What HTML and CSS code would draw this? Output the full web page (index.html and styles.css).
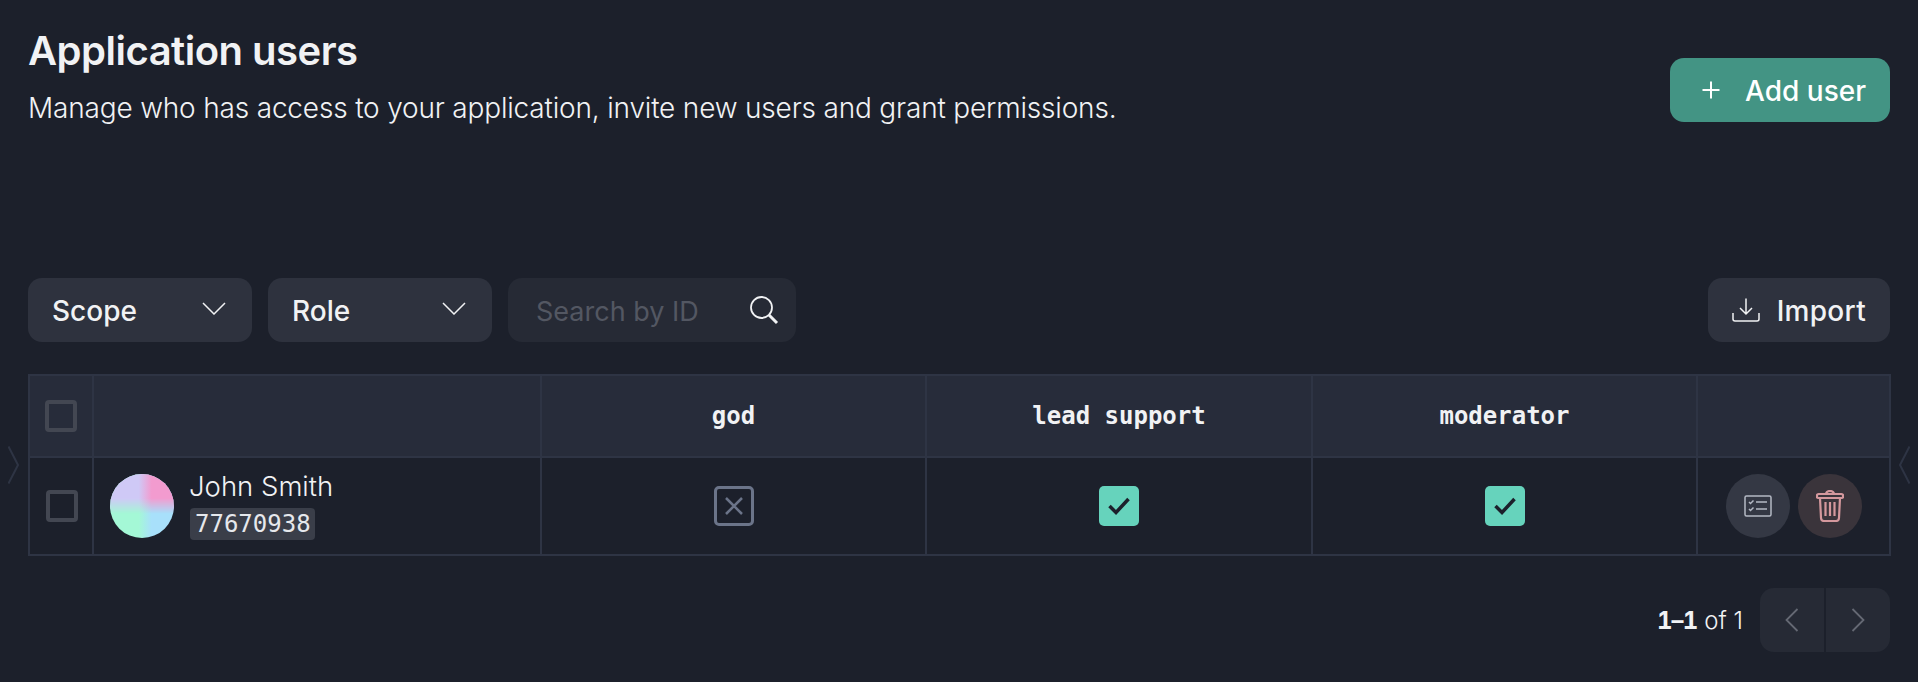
FILE: index.html
```html
<!DOCTYPE html>
<html lang="en">
<head>
<meta charset="UTF-8">
<meta name="viewport" content="width=device-width, initial-scale=1.0">
<title>Application users</title>
<link rel="stylesheet" href="styles.css">
</head>
<body>

<svg class="side-arrow side-arrow-left" viewBox="0 0 11 38"><path d="M0.5 0.5 L10 19 L0.5 37.500"/></svg>
<svg class="side-arrow side-arrow-right" viewBox="0 0 11 38"><path d="M10.500 0.5 L1 19 L10.500 37.500"/></svg>

<div class="page">
  <div class="top">
    <div>
      <h1 class="title">Application users</h1>
      <p class="subtitle">Manage who has access to your application, invite new users and grant permissions.</p>
    </div>
    <button class="btn btn-add">
      <svg class="icon-plus" viewBox="0 0 18 18"><path d="M9 0.500 V17.500 M0.500 9 H17.500"/></svg>
      <span class="btn-label">Add user</span>
    </button>
  </div>

  <div class="filters">
    <button class="select">
      <span class="btn-label">Scope</span>
      <svg class="icon-chevron" viewBox="0 0 24 13"><path d="M1 1 L12 12 L23 1"/></svg>
    </button>
    <button class="select">
      <span class="btn-label">Role</span>
      <svg class="icon-chevron" viewBox="0 0 24 13"><path d="M1 1 L12 12 L23 1"/></svg>
    </button>
    <div class="search">
      <span class="search-text">Search by ID</span>
      <svg class="icon-search" viewBox="0 0 30 30"><circle cx="12.500" cy="12.500" r="10.500"/><path class="thick" d="M20 20 L28 28"/></svg>
    </div>
    <button class="btn btn-import">
      <svg class="icon-import" viewBox="0 0 28 24"><path d="M14 0.500 V15.500 M8 10 L14 16 L20 10 M1 15 V21 Q1 23 3 23 H25 Q27 23 27 21 V15"/></svg>
      <span class="btn-label">Import</span>
    </button>
  </div>

  <table class="users">
    <colgroup>
      <col class="col-check"><col class="col-user"><col class="col-role"><col class="col-role-wide"><col class="col-role"><col class="col-actions">
    </colgroup>
    <thead>
      <tr>
        <th><span class="checkbox"></span></th>
        <th></th>
        <th>god</th>
        <th>lead support</th>
        <th>moderator</th>
        <th></th>
      </tr>
    </thead>
    <tbody>
      <tr>
        <td><span class="checkbox checkbox-row"></span></td>
        <td>
          <div class="user">
            <div class="avatar"></div>
            <div>
              <div class="user-name">John Smith</div>
              <code class="user-id">77670938</code>
            </div>
          </div>
        </td>
        <td>
          <span class="perm perm-off">
            <svg viewBox="0 0 18 18"><path d="M1 1 L17 17 M17 1 L1 17"/></svg>
          </span>
        </td>
        <td>
          <span class="perm perm-on">
            <svg viewBox="0 0 22 18"><path d="M1.500 9 L8 15.500 L20.500 2"/></svg>
          </span>
        </td>
        <td>
          <span class="perm perm-on">
            <svg viewBox="0 0 22 18"><path d="M1.500 9 L8 15.500 L20.500 2"/></svg>
          </span>
        </td>
        <td>
          <div class="actions">
            <button class="round round-details">
              <svg viewBox="0 0 28 22"><rect x="1" y="1" width="26" height="20" rx="1.500"/><path d="M5 7 L6.500 8.500 L9.500 5.500 M5 14 L6.500 15.500 L9.500 12.500 M12 7 H23 M12 14 H23"/></svg>
            </button>
            <button class="round round-delete">
              <svg viewBox="0 0 28 32"><path d="M1 7 V5.500 Q1 4 2.500 4 H25.500 Q27 4 27 5.500 V7 Q27 8 25.500 8 H2.500 Q1 8 1 7 Z M10 4 Q10.500 1 14 1 Q17.500 1 18 4 M4 8 L5 28 Q5.200 31 8 31 H20 Q22.800 31 23 28 L24 8 M9.500 12 V26 M14 12 V26 M18.500 12 V26"/></svg>
            </button>
          </div>
        </td>
      </tr>
    </tbody>
  </table>

  <div class="pagination">
    <span class="page-count"><b>1–1</b> of 1</span>
    <div class="pager">
      <button class="pager-btn"><svg viewBox="0 0 14 24"><path d="M12.500 1 L1.500 12 L12.500 23"/></svg></button>
      <button class="pager-btn"><svg viewBox="0 0 14 24"><path d="M1.500 1 L12.500 12 L1.500 23"/></svg></button>
    </div>
  </div>
</div>

</body>
</html>
```

FILE: styles.css
```css
* {
  box-sizing: border-box;
}
body {
  font-family: 'Inter', 'Liberation Sans', sans-serif;
  background-color: #1c202b;
  color: #f1f2f4;
  margin: 0;
  overflow: hidden;
}
button {
  font-family: inherit;
  border: none;
  cursor: pointer;
}
svg {
  display: block;
  fill: none;
}
.page {
  height: 682px;
  padding: 30px 28px;
}

/* Heading */
.top {
  display: flex;
  justify-content: space-between;
  align-items: flex-start;
  height: 248px;
}
.title {
  margin: 0;
  font-size: 40px;
  line-height: 42px;
  font-weight: 600;
  letter-spacing: -0.5px;
}
.subtitle {
  margin: 18px 0 0;
  font-size: 28px;
  line-height: 36px;
  font-weight: 300;
  letter-spacing: -0.18px;
}

/* Buttons */
.btn {
  display: flex;
  align-items: center;
  height: 64px;
  border-radius: 14px;
  font-size: 28px;
  font-weight: 500;
}
.btn-label {
  padding-top: 2px;
}
.btn-add {
  width: 220px;
  margin-top: 28px;
  padding: 0 24px 0 32px;
  justify-content: space-between;
  background-color: #439484;
  color: #fff;
}
.icon-plus {
  width: 18px;
  height: 18px;
  stroke: #fff;
  stroke-width: 2;
}
.btn-import {
  width: 182px;
  margin-left: auto;
  padding: 0 24px;
  justify-content: space-between;
  background-color: #2e323e;
  color: #f1f2f4;
  letter-spacing: 0.3px;
}
.icon-import {
  width: 28px;
  height: 24px;
  stroke: #f1f2f4;
  stroke-width: 1.500;
}

/* Filters */
.filters {
  display: flex;
  gap: 16px;
}
.select {
  display: flex;
  justify-content: space-between;
  align-items: center;
  width: 224px;
  height: 64px;
  padding: 0 26px 0 24px;
  border-radius: 14px;
  background-color: #2e323e;
  color: #f1f2f4;
  font-size: 28px;
  font-weight: 500;
}
.icon-chevron {
  width: 24px;
  height: 13px;
  stroke: #f1f2f4;
  stroke-width: 1.500;
  margin-top: -4px;
}
.search {
  display: flex;
  justify-content: space-between;
  align-items: center;
  width: 288px;
  height: 64px;
  padding: 0 17px 0 28px;
  border-radius: 14px;
  background-color: #262a35;
}
.search-text {
  padding-top: 2px;
  color: #535762;
  font-size: 27px;
}
.icon-search {
  width: 30px;
  height: 30px;
  stroke: #f1f2f4;
  stroke-width: 1.800;
}
.icon-search .thick {
  stroke-width: 3;
}

/* Table */
.users {
  width: 1861px;
  margin-top: 32px;
  border-collapse: collapse;
  table-layout: fixed;
}
.col-check {
  width: 64px;
}
.col-user {
  width: 448px;
}
.col-role {
  width: 385px;
}
.col-role-wide {
  width: 386px;
}
.col-actions {
  width: 193px;
}
.users th,
.users td {
  border: 2px solid #2e3444;
  padding: 0;
  text-align: center;
}
.users th {
  height: 82px;
  background-color: #272c3a;
  font-family: 'DejaVu Sans Mono', monospace;
  font-size: 24px;
  font-weight: 700;
}
.users td {
  height: 98px;
}
.checkbox {
  display: inline-block;
  width: 32px;
  height: 32px;
  vertical-align: middle;
  border: 4px solid #434752;
  border-radius: 4px;
}
.checkbox-row {
  margin-left: 2px;
}
.user {
  display: flex;
  align-items: center;
  gap: 16px;
  padding-left: 16px;
  text-align: left;
}
.avatar {
  position: relative;
  width: 64px;
  height: 64px;
  border-radius: 50%;
  overflow: hidden;
  background: linear-gradient(to right, #a4f8d6 45%, #a8e0fb 65%);
}
.avatar::after {
  content: "";
  position: absolute;
  inset: 0;
  background: linear-gradient(to right, #cfc9f6 45%, #f29bcf 65%);
  -webkit-mask-image: linear-gradient(to bottom, #000 38%, transparent 62%);
  mask-image: linear-gradient(to bottom, #000 38%, transparent 62%);
}
.user-name {
  margin-top: -4px;
  margin-left: -1px;
  font-size: 27.500px;
  line-height: 34px;
  font-weight: 300;
}
.user-id {
  display: inline-block;
  margin-top: 5px;
  padding: 0 4px 0 5px;
  height: 32px;
  line-height: 32px;
  border-radius: 4px;
  background-color: #3a3e49;
  color: #e6e8ec;
  font-family: 'DejaVu Sans Mono', monospace;
  font-size: 24px;
}
.perm {
  display: inline-flex;
  justify-content: center;
  align-items: center;
  width: 40px;
  height: 40px;
  vertical-align: middle;
  border-radius: 5px;
}
.perm-off {
  border: 3px solid #6b7489;
}
.perm-off svg {
  width: 18px;
  height: 18px;
  stroke: #6b7489;
  stroke-width: 2.500;
}
.perm-on {
  background-color: #66d3bc;
}
.perm-on svg {
  width: 22px;
  height: 18px;
  stroke: #1c202b;
  stroke-width: 3.500;
}
.actions {
  display: flex;
  justify-content: center;
  gap: 8px;
}
.round {
  display: flex;
  justify-content: center;
  align-items: center;
  width: 64px;
  height: 64px;
  padding: 0;
  border-radius: 50%;
}
.round-details {
  background-color: #343844;
}
.round-details svg {
  width: 28px;
  height: 22px;
  stroke: #b4b9c4;
  stroke-width: 1.500;
}
.round-delete {
  background-color: #3a343b;
}
.round-delete svg {
  width: 28px;
  height: 32px;
  stroke: #d4989d;
  stroke-width: 2.200;
}

/* Footer */
.pagination {
  display: flex;
  justify-content: flex-end;
  align-items: center;
  gap: 17px;
  margin-top: 32px;
}
.page-count {
  font-size: 24px;
  font-weight: 300;
}
.page-count b {
  font-weight: 700;
  font-variant-numeric: tabular-nums;
  letter-spacing: -0.8px;
}
.pager {
  display: flex;
  gap: 2px;
  width: 130px;
  height: 64px;
  border-radius: 14px;
  overflow: hidden;
}
.pager-btn {
  display: flex;
  justify-content: center;
  align-items: center;
  flex: 1;
  padding: 0;
  background-color: #262a35;
}
.pager-btn svg {
  width: 14px;
  height: 24px;
  stroke: #646873;
  stroke-width: 1.800;
}

/* Arrows on the page edges */
.side-arrow {
  position: absolute;
  top: 446px;
  width: 11px;
  height: 38px;
  stroke: #2e3444;
  stroke-width: 2;
}
.side-arrow-left {
  left: 8px;
}
.side-arrow-right {
  right: 8px;
}
```
